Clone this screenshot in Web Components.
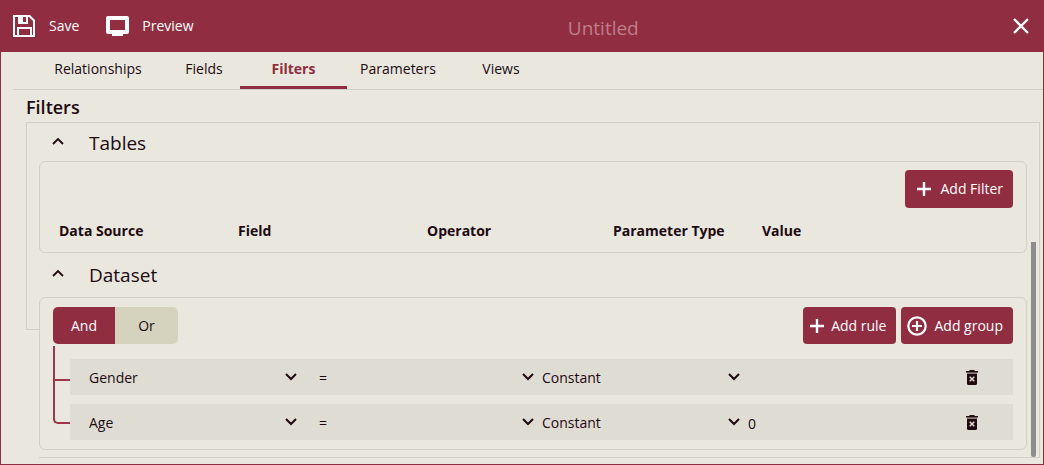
<!DOCTYPE html>
<html lang="en">
<head>
<meta charset="utf-8">
<title>Untitled</title>
<style>
:root{--brand:#912d40;--paper:#eae7df;--line:#d2cfc7;--row:#dfdcd4;--ink:#200a10;--soft:#d5d2be}
body{margin:0;background:var(--paper);color:var(--ink);font:14px/20px "Open Sans","Noto Sans",sans-serif}
</style>
</head>
<body>
<report-designer></report-designer>
<script>
const RESET = `*{box-sizing:border-box}button,select,input{font:inherit;color:inherit;background:none;border:0;margin:0;padding:0;border-radius:0;outline:0}button{cursor:pointer}h1,h2,h3{margin:0;font-weight:400}`;
function define(name, css, html, setup){
  customElements.define(name, class extends HTMLElement{
    constructor(){
      super();
      const t = document.createElement('template');
      t.innerHTML = `<style>${RESET}${css}</style>${html}`;
      this.attachShadow({mode:'open'}).append(t.content.cloneNode(true));
    }
    connectedCallback(){ if(setup) setup(this, this.shadowRoot); }
  });
}

/* name: [width, height, drawing] */
const ICONS = {
  save:[22,22,'<path fill="currentColor" fill-rule="evenodd" d="M0 0h17l5 5v17H0zM2 2v18h2v-8h15v8h1V6l-4-4h-1v7H5V2zM10 2v5h3V2zM6 14v6h11v-6z"/>'],
  screen:[23,20,'<path fill="currentColor" fill-rule="evenodd" d="M2 0h19q2 0 2 2v14q0 2-2 2h-4v2H6v-2H2q-2 0-2-2V2q0-2 2-2zm2 4v10h15V4z"/>'],
  close:[16,16,'<path stroke="currentColor" stroke-width="2.3" d="M1 1l14 14M15 1L1 15"/>'],
  plus:[14,14,'<path stroke="currentColor" stroke-width="2.4" d="M7 0v14M0 7h14"/>'],
  circle:[20,20,'<g fill="none" stroke="currentColor" stroke-width="2.2"><circle cx="10" cy="10" r="8.7"/><path d="M10 5v10M5 10h10"/></g>'],
  up:[12,8,'<path fill="none" stroke="currentColor" stroke-width="1.8" d="M1 7l5-5 5 5"/>'],
  down:[12,8,'<path fill="none" stroke="currentColor" stroke-width="2" d="M1 1l5 5 5-5"/>'],
  trash:[12,15,'<path fill="currentColor" d="M3.5 0h5v1H12v1.5H0V1h3.5zM1 4h10v9.5q0 1.5-1.5 1.5h-7Q1 15 1 13.5z"/><path fill="currentColor" opacity=".45" d="M1 2.5h10V4H1z"/><path stroke="#dfdcd4" stroke-width="1.5" d="M3.7 6.7l4.6 4.6M8.3 6.7l-4.6 4.6"/>']
};
define('ui-icon', '', '', (el, root) => {
  const [w, h, body] = ICONS[el.getAttribute('name')];
  root.innerHTML = `<style>:host{display:block;flex:none}svg{display:block}</style><svg width="${w}" height="${h}" viewBox="0 0 ${w} ${h}" aria-hidden="true">${body}</svg>`;
});

define('app-header', `
:host{display:flex;align-items:center;height:52px;padding:0 14px 0 12px;background:var(--brand);color:#fff}
button{display:flex;align-items:center;gap:14px;height:40px}
.preview{margin-left:27px;gap:13px}
h1{flex:1;text-align:center;font-size:19px;line-height:28px;font-weight:500;color:#bd7f8b;padding-top:4px}`,
`<button type="button"><ui-icon name="save"></ui-icon><span>Save</span></button>
<button type="button" class="preview"><ui-icon name="screen"></ui-icon><span>Preview</span></button>
<h1><slot></slot></h1>
<button type="button" aria-label="Close"><ui-icon name="close"></ui-icon></button>`);

define('app-tabs', `
:host{display:grid;grid-template-columns:140px 72px 107px 102px 104px;height:38px;margin-left:12px;padding-left:15px;border-bottom:1px solid var(--line)}
button{padding-bottom:1px;border-bottom:3px solid transparent;white-space:nowrap}
[aria-selected=true]{color:var(--brand);font-weight:700;border-color:var(--brand)}`,
`<button type="button" role="tab">Relationships</button><button type="button" role="tab">Fields</button><button type="button" role="tab" aria-selected="true">Filters</button><button type="button" role="tab">Parameters</button><button type="button" role="tab">Views</button>`,
el => el.setAttribute('role','tablist'));

define('brand-button', `
:host{display:block}
button{display:flex;align-items:center;gap:var(--gap,5px);height:var(--height,37px);padding:0 10px 0 8px;background:var(--brand);color:#fff;font-weight:500;border-radius:4px;white-space:nowrap}`,
`<button type="button"><slot name="icon"></slot><span><slot></slot></span></button>`);

define('filter-section', `
:host{display:block}
h3 button{display:flex;align-items:center;gap:25px;height:38px;padding:2px 0 0 13px;font-size:19px;line-height:28px}
:host(.dataset) button{height:44px;padding-top:0}
.card{border:1px solid var(--line);border-radius:6px;margin-right:12px;padding:8px 13px}
ui-icon{margin-bottom:4px}`,
`<h3><button type="button" aria-expanded="true"><ui-icon name="up"></ui-icon><slot name="title"></slot></button></h3><div class="card"><slot></slot></div>`);

define('filter-table', `
:host{display:block}
.bar{display:flex;justify-content:flex-end}
table{width:100%;table-layout:fixed;border-collapse:collapse;margin-top:13px}
th{text-align:left;font-weight:700;padding:0 0 3px 6px;height:23px}
.a{width:179px}.b{width:189px}.c{width:186px}.d{width:149px}
brand-button{--height:38px;--gap:9px}
ui-icon{margin:0 1px 0 4px}`,
`<div class="bar"><brand-button><ui-icon slot="icon" name="plus"></ui-icon>Add Filter</brand-button></div>
<table><thead><tr><th class="a" scope="col">Data Source</th><th class="b" scope="col">Field</th><th class="c" scope="col">Operator</th><th class="d" scope="col">Parameter Type</th><th scope="col">Value</th></tr></thead></table>`);

define('pick-list', `
:host{display:grid;align-items:center}
select,ui-icon{grid-area:1/1}
select{appearance:none;width:100%;height:36px;padding-top:2px}
ui-icon{justify-self:end;pointer-events:none}`,
`<select></select><ui-icon name="down"></ui-icon>`, (el, root) => {
  const s = root.querySelector('select');
  s.setAttribute('aria-label', el.getAttribute('label'));
  s.add(new Option(el.getAttribute('value')));
});

define('filter-rule', `
:host{display:grid;grid-template-columns:230fr 223fr 206fr 265fr;align-items:center;height:36px;padding-left:19px;background:var(--row)}
pick-list{margin-right:8px}
.field{margin-right:22px}
.end{display:flex;align-items:center;justify-content:space-between;padding-right:35px}
input{width:160px;height:36px;padding-top:2px}`,
`<pick-list label="Operator" value="="></pick-list><pick-list label="Value type" value="Constant"></pick-list>
<div class="end"><input type="text" aria-label="Value"><button type="button" aria-label="Delete rule"><ui-icon name="trash"></ui-icon></button></div>`,
(el, root) => {
  const field = document.createElement('pick-list');
  field.className = 'field';
  field.setAttribute('label', 'Field');
  field.setAttribute('value', el.getAttribute('field'));
  root.querySelector('style').after(field);
  root.querySelector('input').value = el.getAttribute('value') || '';
});

define('rule-group', `
:host{display:block;padding:1px 0 0}
.bar{display:flex;gap:5px}
.toggle{display:flex;margin-right:auto;border-radius:5px;overflow:hidden}
.toggle button{width:62px;height:37px;background:var(--soft)}
.toggle button:last-child{width:63px}
.toggle [aria-pressed=true]{background:var(--brand);color:#fff;font-weight:500}
.rules{display:grid;gap:9px;margin-top:15px;padding:0 0 1px 17px;position:relative}
.stem{position:absolute;left:0;top:-13px;bottom:17px;width:17px;border:solid #a23549;border-width:0 0 2px 2px;border-bottom-left-radius:5px}
.branch{position:absolute;left:0;top:20px;width:17px;height:2px;background:#a23549}
ui-icon{margin:0 2px 0 -1px}
.group{margin-left:-2px}`,
`<div class="bar"><div class="toggle" role="group" aria-label="Match"><button type="button" aria-pressed="true">And</button><button type="button" aria-pressed="false">Or</button></div>
<brand-button><ui-icon slot="icon" name="plus"></ui-icon>Add rule</brand-button><brand-button><ui-icon class="group" slot="icon" name="circle"></ui-icon>Add group</brand-button></div>
<div class="rules"><span class="stem"></span><span class="branch"></span><slot></slot></div>`);

define('filters-panel', `
:host{display:grid;margin:0 3px 6px 25px}
.frame,.body{grid-area:1/1}
.frame{height:208px;border:1px solid var(--line)}
.body{position:relative;margin-left:13px;background:var(--paper);border:solid var(--line);border-width:1px 1px 1px 0;padding-bottom:7px}
.thumb{position:absolute;right:3px;top:119px;bottom:0;width:5px;background:#8d8d8d;border-radius:0 0 3px 3px}`,
`<div class="frame"></div><div class="body"><slot></slot><span class="thumb"></span></div>`);

define('report-designer', `
:host{display:block;box-sizing:border-box;min-height:100vh;border:solid var(--brand);border-width:0 1px 1px}
h2{font-size:18px;line-height:24px;font-weight:600;margin:5px 0 3px 25px}`,
`<app-header>Untitled</app-header><app-tabs></app-tabs><h2>Filters</h2>
<filters-panel>
<filter-section><span slot="title">Tables</span><filter-table></filter-table></filter-section>
<filter-section class="dataset"><span slot="title">Dataset</span>
<rule-group><filter-rule field="Gender"></filter-rule><filter-rule field="Age" value="0"></filter-rule></rule-group></filter-section>
</filters-panel>`);
</script>
</body>
</html>
